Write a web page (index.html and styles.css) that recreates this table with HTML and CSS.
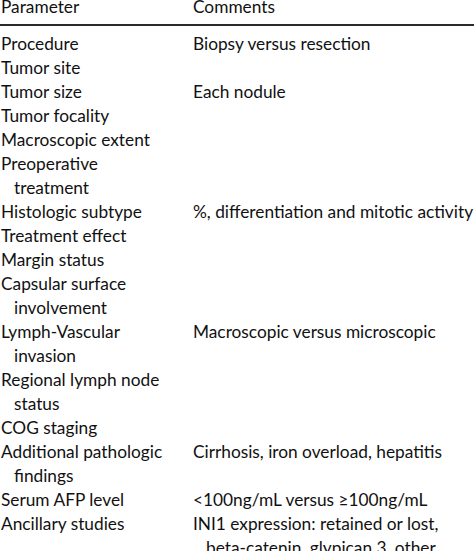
FILE: index.html
```html
<!DOCTYPE html>
<html>
<head>
<meta charset="utf-8">
<link rel="stylesheet" href="styles.css">
</head>
<body>
<div class="params">
  <div class="head">
    <div class="c1">Parameter</div><div class="c2">Comments</div>
  </div>
  <div class="rule"></div>
  <div class="body">
    <div class="c1">Procedure</div><div class="c2">Biopsy versus resection</div>
    <div class="c1">Tumor site</div><div class="c2"></div>
    <div class="c1">Tumor size</div><div class="c2">Each nodule</div>
    <div class="c1">Tumor focality</div><div class="c2"></div>
    <div class="c1">Macroscopic extent</div><div class="c2"></div>
    <div class="c1">Preoperative<br>treatment</div><div class="c2"></div>
    <div class="c1">Histologic subtype</div><div class="c2">%, differentiation and mitotic activity</div>
    <div class="c1">Treatment effect</div><div class="c2"></div>
    <div class="c1">Margin status</div><div class="c2"></div>
    <div class="c1">Capsular surface<br>involvement</div><div class="c2"></div>
    <div class="c1">Lymph-Vascular<br>invasion</div><div class="c2">Macroscopic versus microscopic</div>
    <div class="c1">Regional lymph node<br>status</div><div class="c2"></div>
    <div class="c1">COG staging</div><div class="c2"></div>
    <div class="c1">Additional pathologic<br>findings</div><div class="c2">Cirrhosis, iron overload, hepatitis</div>
    <div class="c1">Serum AFP level</div><div class="c2">&lt;100ng/mL versus &ge;100ng/mL</div>
    <div class="c1">Ancillary studies</div><div class="c2">INI1 expression: retained or lost,<br>beta-catenin, glypican 3, other</div>
  </div>
</div>
</body>
</html>
```

FILE: styles.css
```css
html, body {
  margin: 0;
  padding: 0;
  background: #ffffff;
}
body {
  font-family: Lato, "Open Sans", "Liberation Sans", sans-serif;
  font-size: 17.3px;
  color: #111111;
  overflow: hidden;
}
.params {
  width: 474px;
  display: flex;
  flex-direction: column;
}
.head, .body {
  display: grid;
  grid-template-columns: 192px 1fr;
  padding-left: 1px;
}
.head {
  line-height: 14px;
  height: 14px;
  padding-bottom: 10px;
}
.rule {
  height: 2px;
  background: #2a2a2a;
  flex: none;
}
.body {
  line-height: 24px;
  padding-top: 6px;
}
.body .c1, .body .c2 {
  padding-left: 13px;
  text-indent: -13px;
  white-space: nowrap;
}
```
